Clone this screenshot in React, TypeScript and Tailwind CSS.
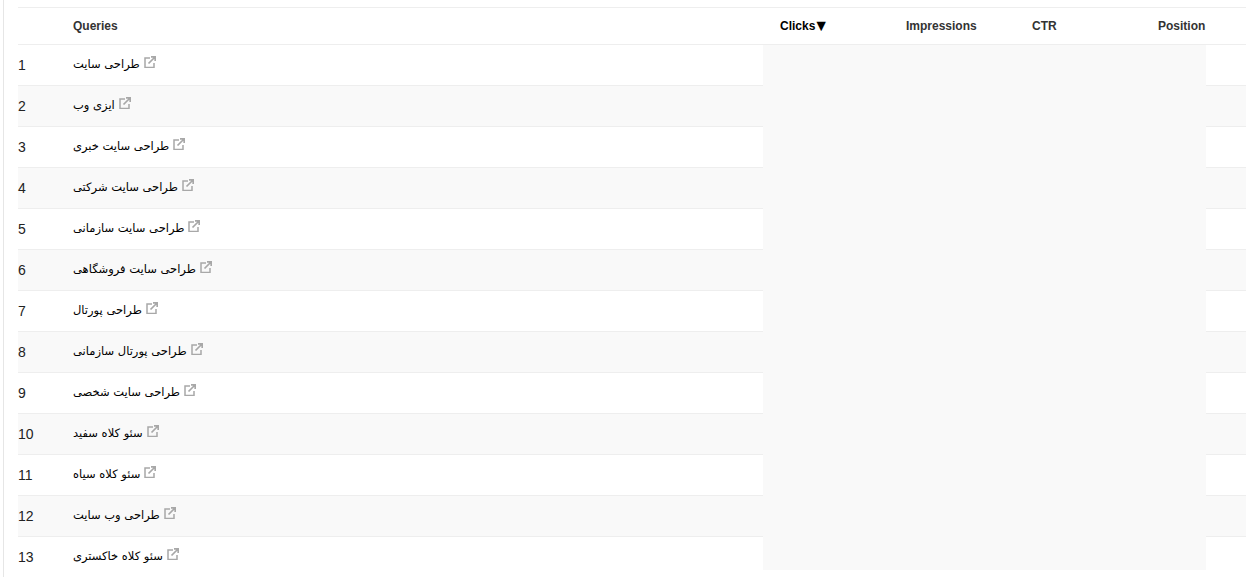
const rows = [
  "طراحی سایت",
  "ایزی وب",
  "طراحی سایت خبری",
  "طراحی سایت شرکتی",
  "طراحی سایت سازمانی",
  "طراحی سایت فروشگاهی",
  "طراحی پورتال",
  "طراحی پورتال سازمانی",
  "طراحی سایت شخصی",
  "سئو کلاه سفید",
  "سئو کلاه سیاه",
  "طراحی وب سایت",
  "سئو کلاه خاکستری",
];

function LinkIcon() {
  return (
    <svg width="12" height="12" viewBox="0 0 12 12" fill="none" className="ml-[4px] mt-[-7px] shrink-0">
      <path d="M6 2H1v9.500h9V7" stroke="#a8a8a8" strokeWidth="1.500" />
      <path d="M4.500 7.500L10.500 1.500M7 .8h4.200V5" stroke="#a8a8a8" strokeWidth="1.700" />
    </svg>
  );
}

export default function App() {
  return (
    <div className="h-[577px] overflow-hidden bg-white font-['Liberation_Sans',sans-serif]">
      <div className="relative ml-[3px] h-full border-l border-[#e6e6e6] pl-[14px] pt-[7px]">
        <div className="flex h-[38px] items-center border-y border-[#eeeeee] text-[12px] font-bold text-[#333333]">
          <div className="w-[55px]" />
          <div className="w-[707px]">Queries</div>
          <div className="flex w-[126px] items-center text-black">
            Clicks<span className="ml-[-2px] text-[16px] leading-none">▼</span>
          </div>
          <div className="w-[126px]">Impressions</div>
          <div className="w-[126px]">CTR</div>
          <div>Position</div>
        </div>
        {rows.map((q, i) => (
          <div
            key={q}
            className={`flex h-[41px] items-center border-b border-[#eeeeee] text-[13px] text-[#222222] ${i % 2 ? "bg-[#f9f9f9]" : "bg-white"}`}
          >
            <div className="w-[55px] text-[14px]">{i + 1}</div>
            <div className="flex items-center">
              <span dir="rtl" className="font-['DejaVu_Sans',sans-serif] text-[11.500px] text-black">{q}</span>
              <LinkIcon />
            </div>
          </div>
        ))}
        <div className="absolute left-[759px] top-[45px] h-[525px] w-[443px] bg-[#f9f9f9]" />
      </div>
    </div>
  );
}
